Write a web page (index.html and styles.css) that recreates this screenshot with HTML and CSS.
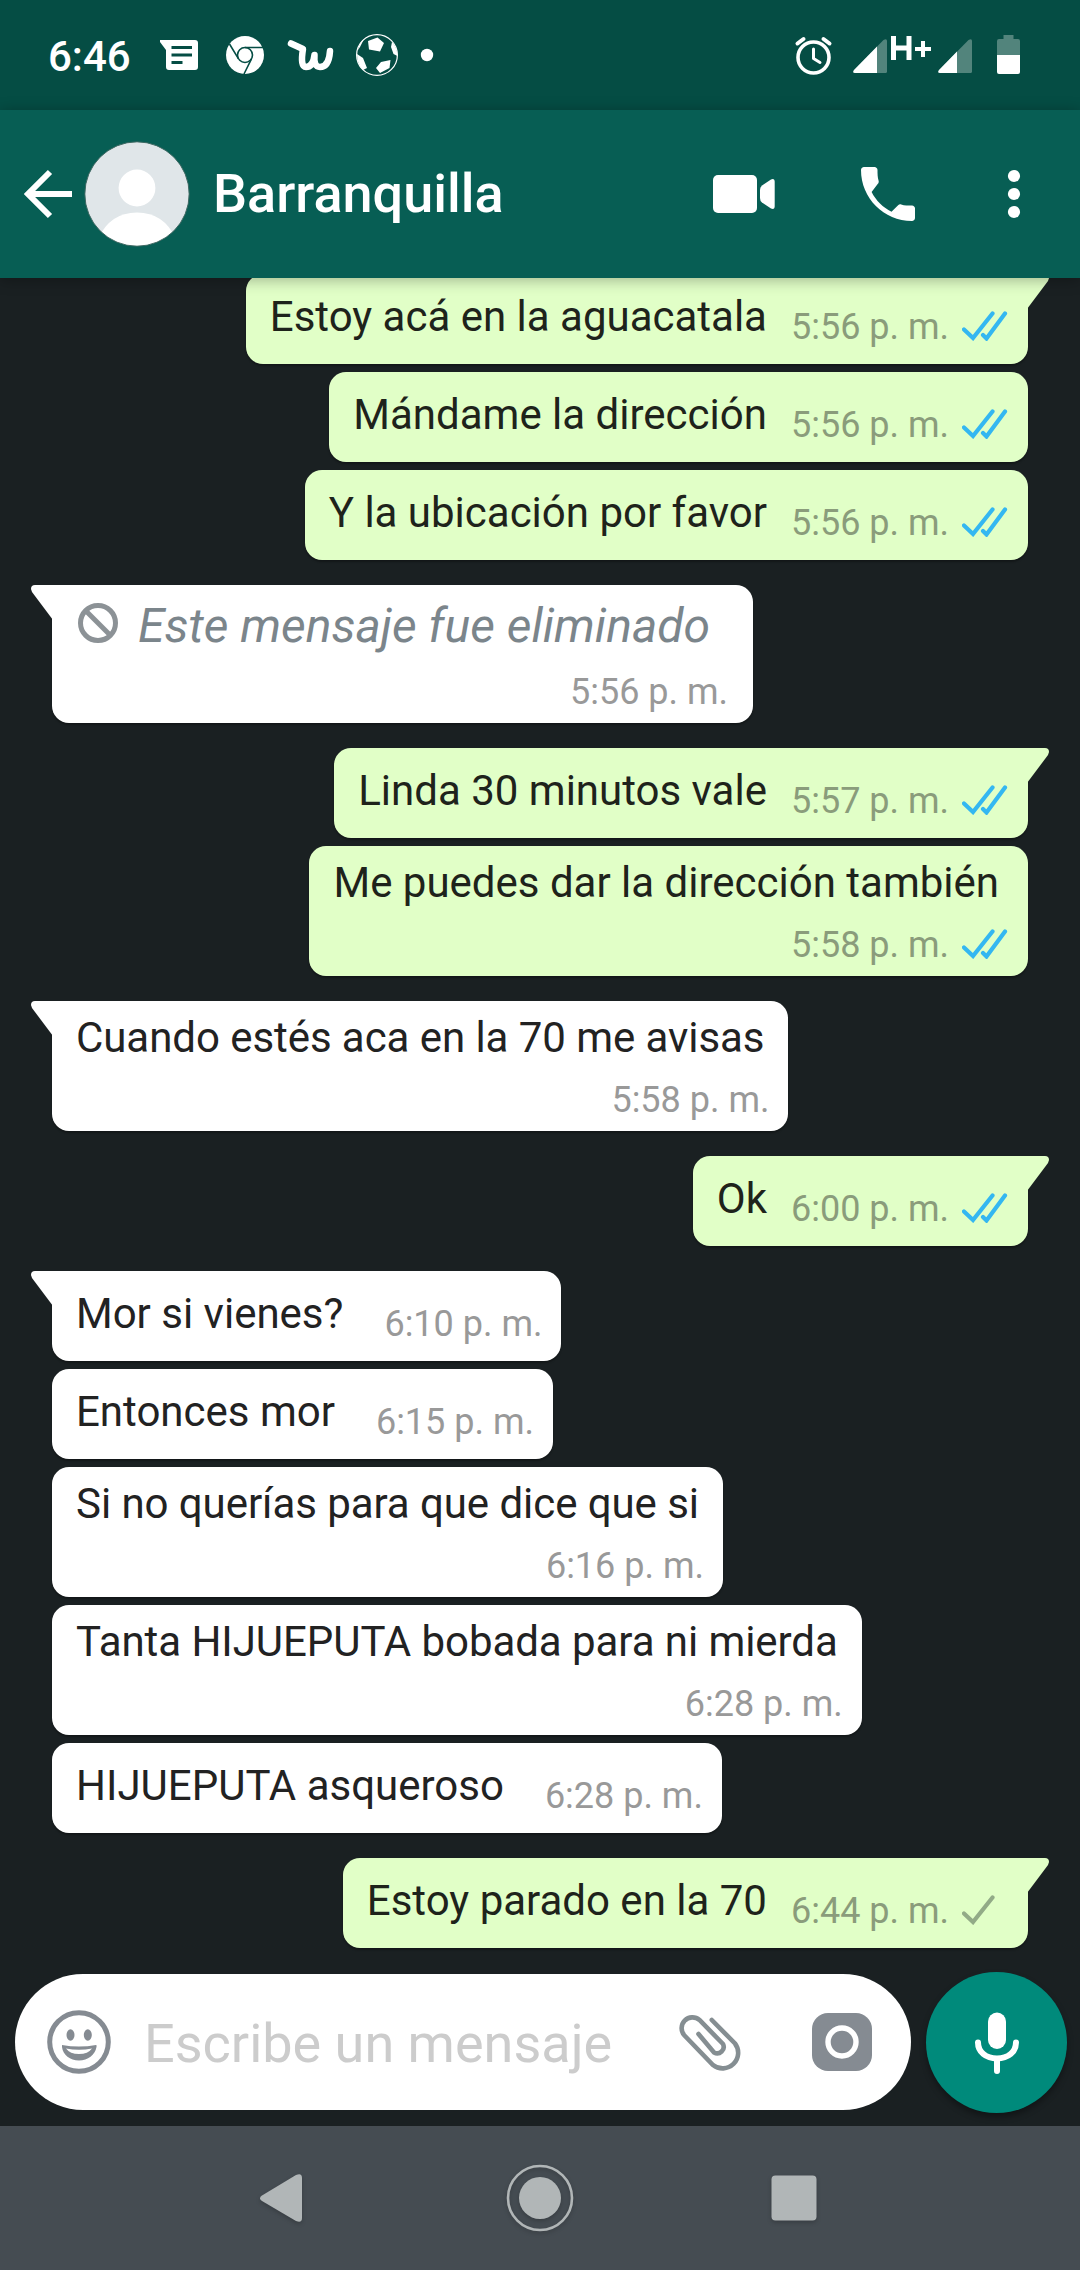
FILE: index.html
```html
<!DOCTYPE html>
<html lang="es">
<head>
<meta charset="utf-8">
<title>Barranquilla</title>
<link rel="stylesheet" href="styles.css">
</head>
<body>
<svg class="defs" aria-hidden="true">
  <symbol id="read" viewBox="0 0 46 30">
    <path d="M2 18.500 11 27 30.500 2.500M21 24l3.500 3.500L43 2.500" fill="none" stroke="#34b7f1" stroke-width="4.200" stroke-linecap="round"/>
  </symbol>
  <symbol id="sent" viewBox="0 0 46 30">
    <path d="M2 18.500 11 27 30.500 2.500" fill="none" stroke="#92ab87" stroke-width="4.200" stroke-linecap="round"/>
  </symbol>
  <symbol id="tail" viewBox="0 0 22 35">
    <path d="M0 0H18Q22 0 22 4L21 7 0 35Z" fill="currentColor"/>
  </symbol>
</svg>

<div class="status">
  <span class="clock">6:46</span>
  <svg class="status-left" viewBox="150 0 300 110" fill="#fff">
    <path fill-rule="evenodd" d="M160 40H195Q198 40 198 43V67Q198 70 195 70H169Q166 70 166 67V50L160 42ZM171.500 46V49H192V46ZM171.500 53.500V56.500H192V53.500ZM171.500 61V64H182.500V61Z"/>
    <circle cx="245" cy="55" r="19"/>
    <g fill="none" stroke="#054d44" stroke-width="1.600">
      <circle cx="245" cy="55" r="7.500"/>
      <path d="M245 47.500H263M238.500 58.800 229.500 44M251.500 58.800 244 74"/>
    </g>
    <path d="M291 43.500 303 49Q300 67 306 67Q313 67 314.500 55Q313.500 67 320 67Q329 67 330 51" fill="none" stroke="#fff" stroke-width="6.500" stroke-linejoin="round" stroke-linecap="round"/>
    <circle cx="377" cy="55" r="20.400" fill="none" stroke="#fff" stroke-width="1.200"/>
    <path d="M368 41 377.500 37.500 384 43 380 51.500 369 49.500ZM357 54 363 58 367 68 363 70Q357 64 357 54ZM381 62 390.500 60 389.500 68 380 73 376 68ZM392 42Q397 47 397.500 56L393.500 54 391 47ZM364 39 360 47 358 50Q359 43 364 39Z"/>
    <circle cx="427" cy="55" r="6.200"/>
  </svg>
  <span class="grow"></span>
  <svg class="status-right" viewBox="780 0 250 110">
    <g fill="none" stroke="#fff">
      <circle cx="813.500" cy="57.500" r="15.500" stroke-width="3.600"/>
      <path d="M813.500 49V58.500L820 62.500" stroke-width="3" stroke-linecap="round" stroke-linejoin="round"/>
      <path d="M797.500 43.500 803.500 39M829.500 43.500 823.500 39" stroke-width="4" stroke-linecap="round"/>
    </g>
    <path d="M854 70 883.500 40Q887 38 887 41V71.500Q887 73 885.500 73H855Q852 73 854 70Z" fill="#52847c"/>
    <path d="M854 70 877 46.500V73H855Q852 73 854 70Z" fill="#fff"/>
    <path d="M891 36H896V45.500H906.500V36H911.500V60H906.500V50.500H896V60H891ZM921 41H925V47H931V51H925V57H921V51H915V47H921Z" fill="#fff"/>
    <path d="M939 70 968.500 40Q972 38 972 41V71.500Q972 73 970.500 73H940Q937 73 939 70Z" fill="#52847c"/>
    <path d="M939 70 957 51.500V73H940Q937 73 939 70Z" fill="#fff"/>
    <path d="M1003.500 35H1013.500V39H1018Q1020 39 1020 41V55H997V41Q997 39 999 39H1003.500Z" fill="#52847c"/>
    <path d="M997 55H1020V72Q1020 74 1018 74H999Q997 74 997 72Z" fill="#fff"/>
  </svg>
</div>

<header class="bar">
  <svg class="back" viewBox="20 110 60 168"><path d="M72 194H28M50 172 28 194 50 216" fill="none" stroke="#fff" stroke-width="6"/></svg>
  <svg class="avatar" viewBox="0 0 106 106">
    <defs><clipPath id="disc"><circle cx="53" cy="53" r="52"/></clipPath></defs>
    <circle cx="53" cy="53" r="52" fill="#e0e6e9"/>
    <g clip-path="url(#disc)" fill="#fff"><circle cx="53" cy="47" r="18.400"/><path d="M14 98Q26 71.500 53 71.500T92 98V106H14Z"/></g>
    <circle cx="53" cy="53" r="52.200" fill="none" stroke="#3f6963" stroke-width="1"/>
  </svg>
  <h1>Barranquilla</h1>
  <svg class="actions" viewBox="700 110 340 168" fill="#fff">
    <rect x="713" y="175" width="44" height="38" rx="5"/>
    <path d="M760 190Q760 187 762 185.500L771 179.500Q774.700 178 774.700 182V206Q774.700 210 771 208.500L762 202.500Q760 201 760 198Z"/>
    <path transform="translate(852 158) scale(3)" d="M6.540 11.300c1.440 2.850 3.810 5.170 6.630 6.610l2.200-2.200c.27-.27.670-.36 1.020-.24 1.120.37 2.320.37 3.610.37.550 0 1 .45 1 1V20c0 .55-.45 1-1 1-9.390 0-17-7.610-17-17 0-.55.450-1 1-1h3.500c.55 0 1 .45 1 1 0 1.250.02 2.450.37 3.570.110.350.030.740-.250 1.020z"/>
    <circle cx="1014" cy="176" r="6.100"/><circle cx="1014" cy="194" r="6.100"/><circle cx="1014" cy="212" r="6.100"/>
  </svg>
</header>

<main class="chat">
  <div class="msg out first"><svg class="tail"><use href="#tail"/></svg><p>Estoy acá en la aguacatala</p><span class="meta"><time>5:56 p. m.</time><svg class="tick"><use href="#read"/></svg></span></div>
  <div class="msg out"><p>Mándame la dirección</p><span class="meta"><time>5:56 p. m.</time><svg class="tick"><use href="#read"/></svg></span></div>
  <div class="msg out"><p>Y la ubicación por favor</p><span class="meta"><time>5:56 p. m.</time><svg class="tick"><use href="#read"/></svg></span></div>

  <div class="msg in first tall deleted"><svg class="tail"><use href="#tail"/></svg>
    <p><svg class="ban" viewBox="0 0 40 40"><g fill="none" stroke="#8c9296" stroke-width="5"><circle cx="20" cy="20" r="17.500"/><path d="M8 8 32 32"/></g></svg><em>Este mensaje fue eliminado</em></p>
    <span class="meta"><time>5:56 p. m.</time></span></div>

  <div class="msg out first"><svg class="tail"><use href="#tail"/></svg><p>Linda 30 minutos vale</p><span class="meta"><time>5:57 p. m.</time><svg class="tick"><use href="#read"/></svg></span></div>
  <div class="msg out tall"><p>Me puedes dar la dirección también</p><span class="meta"><time>5:58 p. m.</time><svg class="tick"><use href="#read"/></svg></span></div>

  <div class="msg in first tall"><svg class="tail"><use href="#tail"/></svg><p>Cuando estés aca en la 70 me avisas</p><span class="meta"><time>5:58 p. m.</time></span></div>

  <div class="msg out first"><svg class="tail"><use href="#tail"/></svg><p>Ok</p><span class="meta"><time>6:00 p. m.</time><svg class="tick"><use href="#read"/></svg></span></div>

  <div class="msg in first"><svg class="tail"><use href="#tail"/></svg><p>Mor si vienes?</p><span class="meta"><time>6:10 p. m.</time></span></div>
  <div class="msg in"><p>Entonces mor</p><span class="meta"><time>6:15 p. m.</time></span></div>
  <div class="msg in tall"><p>Si no querías para que dice que si</p><span class="meta"><time>6:16 p. m.</time></span></div>
  <div class="msg in tall"><p>Tanta HIJUEPUTA bobada para ni mierda</p><span class="meta"><time>6:28 p. m.</time></span></div>
  <div class="msg in"><p>HIJUEPUTA asqueroso</p><span class="meta"><time>6:28 p. m.</time></span></div>

  <div class="msg out first"><svg class="tail"><use href="#tail"/></svg><p>Estoy parado en la 70</p><span class="meta"><time>6:44 p. m.</time><svg class="tick"><use href="#sent"/></svg></span></div>
</main>

<footer class="composer">
  <div class="field">
    <svg class="smile" viewBox="0 0 66 66">
      <circle cx="33" cy="33" r="29.300" fill="none" stroke="#858b92" stroke-width="5"/>
      <g fill="#858b92"><ellipse cx="24.500" cy="26" rx="4" ry="5.800"/><ellipse cx="41.800" cy="26" rx="4" ry="5.800"/>
      <path fill-rule="evenodd" d="M16 36Q33 39 50 36Q51 36 50.500 38C49 46 42 51.500 33 51.500S17 46 16 38ZM20 39.500Q24 45 33 45T46 39.500Q33 42 20 39.500Z"/></g>
    </svg>
    <span class="placeholder">Escribe un mensaje</span>
    <svg class="clip" viewBox="675 2010 70 66" fill="none" stroke="#858e92" stroke-width="4.600" stroke-linecap="round">
      <path d="M711.800 2021 735 2044.500A15.500 15.500 0 0 1 713 2066L684.500 2036.500A10.800 10.800 0 0 1 699.500 2021L723 2045A6.500 6.500 0 0 1 714 2053.500L698.500 2035"/>
    </svg>
    <svg class="camera" viewBox="0 0 60 58">
      <rect width="60" height="58" rx="16" fill="#858b92"/><circle cx="30" cy="29" r="14" fill="none" stroke="#fff" stroke-width="5.400"/>
    </svg>
  </div>
  <div class="mic">
    <svg viewBox="970 2010 54 66">
      <rect x="988" y="2012.500" width="18" height="36.500" rx="9" fill="#fff"/>
      <path d="M978 2042.500C978 2052 986 2058.500 997 2058.500S1016 2052 1016 2042.500M997 2059V2071" fill="none" stroke="#fff" stroke-width="6" stroke-linecap="round"/>
    </svg>
  </div>
</footer>

<nav class="nav">
  <svg viewBox="0 2126 1080 144" fill="#b1b6b7">
    <path d="M262 2195.500 296 2175Q302 2172.500 302 2178V2218Q302 2223.500 296 2221L262 2201Q258 2198 262 2195.500Z"/>
    <circle cx="540" cy="2198" r="32" fill="none" stroke="#b1b6b7" stroke-width="2.600"/><circle cx="540" cy="2198" r="21"/>
    <rect x="771.500" y="2175.500" width="45" height="45" rx="4"/>
  </svg>
</nav>
</body>
</html>
```
FILE: styles.css
```css
* { box-sizing: border-box; }

body {
  margin: 0;
  width: 1080px;
  height: 2270px;
  display: flex;
  flex-direction: column;
  background: #1a2022;
  font-family: Roboto, "Liberation Sans", sans-serif;
  overflow: hidden;
}

svg { display: block; flex: none; }
.defs { position: absolute; width: 0; height: 0; }
p, h1 { margin: 0; font-weight: 400; white-space: nowrap; }

.status {
  flex: none;
  height: 110px;
  display: flex;
  padding: 0 50px 0 48px;
  background: #054d44;
  color: #fff;
}
.clock { width: 102px; font-size: 42px; font-weight: 500; line-height: 113px; }
.status-left { width: 300px; height: 110px; }
.status-right { width: 250px; height: 110px; }
.grow { flex: 1; }

.bar {
  flex: none;
  position: relative;
  z-index: 1;
  height: 168px;
  display: flex;
  align-items: center;
  padding: 0 40px 0 20px;
  background: #075e54;
  color: #fff;
  box-shadow: 0 2px 14px rgba(0, 0, 0, .3);
}
.back { width: 60px; height: 168px; }
.avatar { width: 106px; height: 106px; margin: -1px 0 0 3.5px; }
h1 { flex: 1; margin-left: 23.5px; font-size: 54px; font-weight: 500; line-height: 168px; }
.actions { width: 340px; height: 168px; }

.chat {
  flex: none;
  height: 1694px;
  padding: 0 52px;
  margin-top: -4px;
  display: flex;
  flex-direction: column;
  align-items: flex-start;
  gap: 8px;
}
.msg {
  flex: none;
  position: relative;
  height: 90px;
  display: flex;
  align-items: flex-start;
  border-radius: 17px;
  box-shadow: 0 2px 2px rgba(0, 0, 0, .3);
  font-size: 42px;
  line-height: 60px;
}
.msg p { padding: 13px 0 0 24px; }
.meta {
  display: flex;
  margin-top: 31px;
  font-size: 36px;
  line-height: 44px;
}
.in { background: #fff; color: #222; }
.in .meta { margin-left: 41px; margin-right: 19px; color: #999; }
.out { align-self: flex-end; background: #e1ffc7; color: #1e231b; }
.out .meta { margin-left: 24px; margin-right: 20px; color: #8a9c7b; }
.first + .first, .msg:not(.first) + .first { margin-top: 17px; }
.out.first { border-top-right-radius: 0; }
.in.first { border-top-left-radius: 0; }

.tail { position: absolute; top: 0; width: 22px; height: 35px; }
.out .tail { left: 100%; margin-left: -1px; color: #e1ffc7; }
.in .tail { right: 100%; margin-right: -1px; color: #fff; transform: scaleX(-1); }
.tick { width: 46px; height: 30px; margin: 6px 0 0 13px; }

.tall { height: 130px; flex-direction: column; }
.tall p { padding: 7px 24px 0 24px; letter-spacing: -.06px; }
.out.tall p { padding-right: 29px; letter-spacing: 0; }
.tall .meta { align-self: flex-end; margin-top: 10px; }

.deleted { height: 138px; }
.deleted p {
  display: flex;
  padding: 11px 43px 0 26px;
  color: #7b858b;
  font-size: 48px;
  letter-spacing: 0;
}
.ban { width: 40px; height: 40px; margin: 7px 20px 0 0; }
.deleted .meta { margin-top: 14px; margin-right: 25px; }

.composer {
  flex: none;
  height: 158px;
  display: flex;
  align-items: flex-start;
  gap: 15px;
  padding: 4px 13px 0 15px;
}
.field {
  width: 896px;
  height: 136px;
  margin-top: 2px;
  display: flex;
  align-items: center;
  border-radius: 68px;
  background: #fff;
}
.smile { width: 66px; height: 66px; margin-left: 31px; }
.placeholder { flex: 1; margin-left: 32px; padding-top: 3px; color: #ccc; font-size: 54px; line-height: 136px; white-space: nowrap; }
.clip { width: 70px; height: 66px; }
.camera { width: 60px; height: 58px; margin: 0 39px 0 67px; }
.mic {
  width: 141px;
  height: 141px;
  display: flex;
  align-items: center;
  justify-content: center;
  border-radius: 50%;
  background: #008a7b;
  box-shadow: 0 4px 6px rgba(0, 0, 0, .35);
}
.mic svg { width: 54px; height: 66px; }

.nav { flex: none; height: 144px; background: #454c52; }
.nav svg { width: 1080px; height: 144px; filter: drop-shadow(0 2px 2px rgba(0, 0, 0, .2)); }
```
